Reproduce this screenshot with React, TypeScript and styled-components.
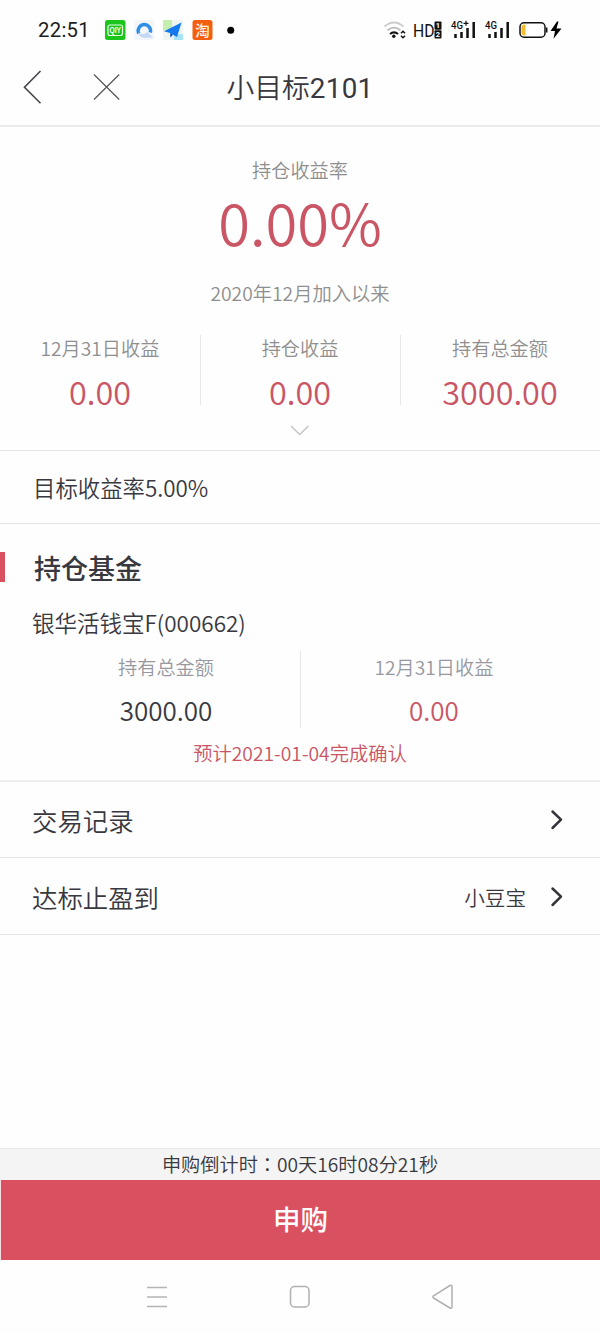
import React from 'react';
import styled, { createGlobalStyle } from 'styled-components';

const GlobalStyle = createGlobalStyle`
  * { box-sizing: border-box; }
  body { margin: 0; background: #fefefe; }
`;

const RED = '#c95565';

const Screen = styled.div`
  width: 600px;
  height: 1333px;
  display: flex;
  flex-direction: column;
  overflow: hidden;
  background: #fefefe;
  color: #38383e;
  font-family: 'Noto Sans CJK SC', sans-serif;
  font-weight: 350;
  svg { display: block; flex: none; }
`;

const Text = styled.div<{ $size: number; $line: number; $color?: string; $weight?: number }>`
  font-size: ${p => p.$size}px;
  line-height: ${p => p.$line}px;
  height: ${p => p.$line}px;
  color: ${p => p.$color || 'inherit'};
  font-weight: ${p => p.$weight || 'inherit'};
  white-space: nowrap;
`;

const StatusBar = styled.div`
  height: 60px;
  padding: 0 38px;
  display: flex;
  justify-content: space-between;
  align-items: center;
`;

const Clock = styled.div`
  width: 67px;
  font-family: Roboto, sans-serif;
  font-weight: 400;
  font-size: 20.3px;
  line-height: 28px;
  letter-spacing: 0.3px;
  color: #1c1c1c;
`;

const StatusGroup = styled.div`
  display: flex;
  align-items: center;
`;

const Header = styled.header`
  height: 67px;
  border-bottom: 2px solid #ebebeb;
  display: grid;
  grid-template-columns: 160px 1fr 160px;
  align-items: center;
`;

const HeaderActions = styled.div`
  display: flex;
  align-items: center;
  gap: 51px;
  padding: 0 0 12px 23px;
`;

const Title = styled.h1`
  margin: 0;
  padding-bottom: 11px;
  text-align: center;
  font-size: 27.8px;
  line-height: 36px;
  font-weight: 350;
`;

const TitleNumber = styled.span`
  font-family: Roboto, sans-serif;
  font-weight: 400;
  letter-spacing: 0.3px;
`;

const Summary = styled.section`
  height: 324px;
  padding-top: 29px;
  border-bottom: 1px solid #e6e6e6;
  display: flex;
  flex-direction: column;
  align-items: center;
`;

const SinceLabel = styled.div`
  margin: 20px 0 28px;
`;

const Stats = styled.div<{ $height: number }>`
  align-self: stretch;
  display: flex;
  height: ${p => p.$height}px;
`;

const Stat = styled.div`
  flex: 1;
  display: flex;
  flex-direction: column;
  align-items: center;
  & + & { box-shadow: inset 1px 0 #e8e8ea; }
`;

const Expand = styled.div`
  margin-top: 20px;
`;

const TargetRow = styled.section`
  height: 73px;
  padding: 19px 33px 0;
  border-bottom: 1px solid #e6e6e6;
`;

const Fund = styled.section`
  height: 258px;
  padding-top: 28px;
  border-bottom: 2px solid #eeeeef;
`;

const FundTitle = styled.div`
  display: flex;
  align-items: center;
  gap: 29px;
  height: 30px;
  &::before {
    content: '';
    width: 5px;
    height: 30px;
    background: #d95060;
  }
`;

const FundHeading = styled.div`
  padding-top: 2px;
`;

const FundName = styled.div`
  padding: 24px 32px 13px;
`;

const FundStats = styled.div`
  padding: 0 32px;
`;

const Notice = styled.div`
  display: flex;
  justify-content: center;
  padding-top: 11px;
`;

const LinkRow = styled.div<{ $height: number }>`
  height: ${p => p.$height}px;
  padding: 1px 36px 0 32px;
  border-bottom: 1px solid #e6e6e6;
  display: flex;
  align-items: center;
  justify-content: space-between;
`;

const LinkValue = styled.div`
  display: flex;
  align-items: center;
  gap: 24px;
`;

const Countdown = styled.div`
  margin-top: auto;
  height: 32px;
  background: #f4f4f4;
  border-top: 1px solid #e9e9e9;
  display: flex;
  justify-content: center;
`;

const Colon = styled.span`
  font-family: 'Noto Sans CJK TC', sans-serif;
`;

const BuyButton = styled.button`
  height: 80px;
  margin: 0;
  padding: 0 0 3px;
  border: 0;
  border-left: 1px solid #f6dfe2;
  background: #d95060;
  color: #fff;
  font-family: inherit;
  font-size: 27.5px;
  font-weight: 500;
  line-height: 77px;
`;

const NavBar = styled.nav`
  height: 73px;
  display: flex;
  justify-content: center;
  align-items: center;
  gap: 121px;
`;

const AppIcons = () => (
  <svg width="132" height="22" viewBox="105 19 132 22">
    <rect x="105" y="20" width="20.5" height="20" rx="2.5" fill="#1cc51c" />
    <rect x="108" y="25" width="14.5" height="10.5" rx="2" fill="none" stroke="#e4ffe0" strokeWidth="1.2" />
    <text x="115.2" y="33.3" textAnchor="middle" fontSize="8.5" fontWeight="700" fontFamily="Liberation Sans" fill="#f0fff0" textLength="11.5" lengthAdjust="spacingAndGlyphs">QIY</text>
    <rect x="134.500" y="20" width="19.500" height="20" rx="3" fill="#f2f5fa" />
    <path d="M138.800 33.500A6.200 6.200 0 1 1 150.300 32.500" fill="none" stroke="#2f8fe6" strokeWidth="3.400" />
    <path d="M138 32.500Q140 38.800 147 37.800Q150.500 37.300 153 38L147.500 32Q143 36 138 32.500Z" fill="#c3d8f4" />
    <rect x="163" y="20" width="20" height="20" fill="#eef5f3" />
    <path d="M163 20h9v8l-9 3z" fill="#c4efb0" />
    <path d="M174 34h9v6h-9z" fill="#a8e3fa" />
    <path d="M181.500 22.500L164 31.300L170 33L177 37z" fill="#1478ee" />
    <path d="M170 33L170.500 37.500L173 34.700z" fill="#0a50b8" />
    <rect x="192.500" y="20" width="20" height="20" rx="2.500" fill="#f2600f" />
    <text x="202.500" y="35.500" textAnchor="middle" fontSize="14.500" fontWeight="500" fontFamily="Noto Sans CJK SC" fill="#fff3e8">淘</text>
    <circle cx="230.700" cy="30.200" r="3.500" fill="#000" />
  </svg>
);

const SystemIcons = () => (
  <svg width="180" height="24" viewBox="382 18 180 24" fontFamily="Roboto, sans-serif" fill="#111">
    <g fill="none" strokeWidth="1.800">
      <path d="M384.500 26.500Q394 18.500 403.500 26.500" stroke="#ccc" />
      <path d="M387.500 30.300Q394 25 400.500 30.300" stroke="#bbb" />
      <path d="M390 34Q394 30.800 398 34" stroke="#111" strokeWidth="2.200" />
      <path d="M401 33.300l2-2 2 2M401 35.700l2 2 2-2" stroke="#111" strokeWidth="1.500" />
    </g>
    <circle cx="393.800" cy="36.300" r="1.700" />
    <text x="413" y="36.700" fontSize="18.500" fontWeight="400" textLength="21.500" lengthAdjust="spacingAndGlyphs">HD</text>
    <rect x="434.500" y="21.500" width="7" height="8.200" rx="1" />
    <rect x="434.500" y="30.300" width="7" height="8.200" rx="1" />
    <g fill="#fff" fontSize="7.500" fontWeight="700" textAnchor="middle">
      <text x="438" y="28.300">1</text>
      <text x="438" y="37.100">2</text>
    </g>
    <text x="451" y="29.300" fontSize="10.500" fontWeight="500" textLength="12" lengthAdjust="spacingAndGlyphs">4G</text>
    <path d="M463.500 23.300h5M466 20.800v5" stroke="#111" strokeWidth="1.200" />
    <path d="M455.500 34v4M461.500 32v6M467.500 28v10M473.700 22v16" stroke="#111" strokeWidth="2.500" />
    <text x="485" y="29.300" fontSize="10.500" fontWeight="500" textLength="12" lengthAdjust="spacingAndGlyphs">4G</text>
    <path d="M489.500 34v4M495.500 32v6M501.500 28v10M507.700 22v16" stroke="#111" strokeWidth="2.500" />
    <rect x="520" y="22.800" width="25" height="14.400" rx="4" fill="#fff" stroke="#111" strokeWidth="1.500" />
    <path d="M525.500 24.500v11h-1q-3 0-3-3v-5q0-3 3-3z" fill="#f2bd2c" />
    <path d="M546.700 27.500v5" stroke="#111" strokeWidth="1.500" />
    <path d="M557 21.500L550.500 31H555L553.500 38.700L561.500 28.500H556.500L558.500 21.500z" fill="#000" />
  </svg>
);

const Chevron = () => (
  <svg width="14" height="22" viewBox="0 0 14 22" fill="none" stroke="#34343c" strokeWidth="2.500" strokeLinecap="round" strokeLinejoin="round">
    <path d="M2.500 2.500L11 10.700L2.500 19" />
  </svg>
);

const stats = [
  ['12月31日收益', '0.00'],
  ['持仓收益', '0.00'],
  ['持有总金额', '3000.00'],
];

export default function App() {
  return (
    <Screen>
      <GlobalStyle />
      <StatusBar>
        <StatusGroup>
          <Clock>22:51</Clock>
          <AppIcons />
        </StatusGroup>
        <SystemIcons />
      </StatusBar>
      <Header>
        <HeaderActions>
          <svg width="19" height="34" viewBox="0 0 19 34" fill="none" stroke="#44444a" strokeWidth="1.600">
            <path d="M17.500 1L1.500 17.200L17.500 33.200" />
          </svg>
          <svg width="28" height="28" viewBox="0 0 28 28" fill="none" stroke="#55555a" strokeWidth="1.200">
            <path d="M1 1.500L26.200 26.500M26.200 1.500L1 26.500" />
          </svg>
        </HeaderActions>
        <Title>小目标<TitleNumber>2101</TitleNumber></Title>
      </Header>
      <Summary>
        <Text $size={19.2} $line={28} $color="#8f8f8f">持仓收益率</Text>
        <Text $size={57.8} $line={75} $color={RED}>0.00%</Text>
        <SinceLabel>
          <Text $size={19.3} $line={28} $color="#8f8f8f">2020年12月加入以来</Text>
        </SinceLabel>
        <Stats $height={70}>
          {stats.map(([label, value]) => (
            <Stat key={label}>
              <Text $size={19.2} $line={26} $color="#8f8f8f">{label}</Text>
              <Text $size={32.4} $line={60} $color={RED}>{value}</Text>
            </Stat>
          ))}
        </Stats>
        <Expand>
          <svg width="20" height="12" viewBox="0 0 20 12" fill="none" stroke="#c4c4c8" strokeWidth="1.500">
            <path d="M1 1L9.700 9.500L18.400 1" />
          </svg>
        </Expand>
      </Summary>
      <TargetRow>
        <Text $size={22.4} $line={34}>目标收益率5.00%</Text>
      </TargetRow>
      <Fund>
        <FundTitle>
          <FundHeading>
            <Text $size={27} $line={32} $weight={500}>持仓基金</Text>
          </FundHeading>
        </FundTitle>
        <FundName>
          <Text $size={22.5} $line={32}>银华活钱宝F(000662)</Text>
        </FundName>
        <FundStats>
          <Stats $height={77}>
            <Stat>
              <Text $size={19.2} $line={32} $color="#9898a0">持有总金额</Text>
              <Text $size={26} $line={54}>3000.00</Text>
            </Stat>
            <Stat>
              <Text $size={19.2} $line={32} $color="#9898a0">12月31日收益</Text>
              <Text $size={26} $line={54} $color={RED}>0.00</Text>
            </Stat>
          </Stats>
        </FundStats>
        <Notice>
          <Text $size={19.3} $line={28} $color={RED}>预计2021-01-04完成确认</Text>
        </Notice>
      </Fund>
      <LinkRow $height={76}>
        <Text $size={25.4} $line={36}>交易记录</Text>
        <Chevron />
      </LinkRow>
      <LinkRow $height={77}>
        <Text $size={25.4} $line={36}>达标止盈到</Text>
        <LinkValue>
          <Text $size={20.6} $line={30}>小豆宝</Text>
          <Chevron />
        </LinkValue>
      </LinkRow>
      <Countdown>
        <Text $size={19.2} $line={30}>申购倒计时<Colon>：</Colon>00天16时08分21秒</Text>
      </Countdown>
      <BuyButton>申购</BuyButton>
      <NavBar>
        <svg width="22" height="24" viewBox="0 0 22 24" stroke="#b5b5b5" strokeWidth="1.500">
          <path d="M1 2.500h20M1 12h20M1 21.500h20" />
        </svg>
        <svg width="22" height="24" viewBox="0 0 22 24" fill="none" stroke="#b0b0b0" strokeWidth="1.500">
          <rect x="1.500" y="1.500" width="18.500" height="20.500" rx="4" />
        </svg>
        <svg width="22" height="26" viewBox="0 0 22 26" fill="none" stroke="#b0b0b0" strokeWidth="1.500" strokeLinejoin="round">
          <path d="M1.500 11.800L18 1.500Q20 .5 20 3V22.500Q20 25 18 24L1.500 14Q.3 13 1.500 11.800Z" />
        </svg>
      </NavBar>
    </Screen>
  );
}
